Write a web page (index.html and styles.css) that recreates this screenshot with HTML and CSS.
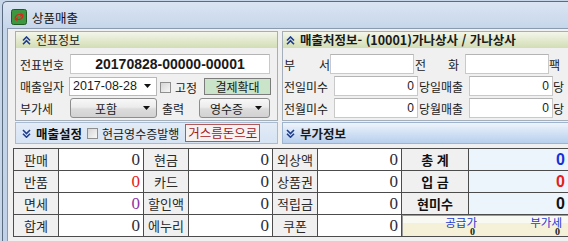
FILE: index.html
```html
<!doctype html>
<html lang="ko">
<head>
  <meta charset="UTF-8">
  <meta name="viewport" content="width=device-width, initial-scale=1.0">
  <title>상품매출</title>
  <link rel="stylesheet" href="styles.css">
</head>
<body>
<div class="window">
  <div class="titlebar">
    <svg class="titlebar__icon" width="16" height="16" viewBox="0 0 16 16">
      <rect x="0.5" y="0.5" width="15" height="15" rx="2" fill="#3d9640" stroke="#1f5a22"/>
      <path d="M3.5 9.5c0-3.5 3.5-5.5 6.5-4.2L9.2 3.5l3.6 2.6-3.9 1.7.6-1.5C7.4 5.5 5 6.8 4.8 9.6z" fill="#d8281a"/>
      <path d="M12.5 6.5c0 3.5-3.5 5.5-6.5 4.2l.8 1.8-3.6-2.6 3.9-1.7-.6 1.5c2.1.8 4.5-.5 4.7-3.3z" fill="#d8281a"/>
    </svg>
    <span class="titlebar__text">상품매출</span>
  </div>

  <div class="client">
    <div class="top">
      <!-- 전표정보 / 매출설정 -->
      <div class="side side--left">
        <section class="panel">
          <h2 class="panel__head">
            <svg class="chev" width="9" height="9" viewBox="0 0 9 9"><path d="M1 4.5L4.5 1 8 4.5M1 8.2L4.5 4.7 8 8.2"/></svg>
            전표정보
          </h2>
          <div class="panel__body">
            <div class="row">
              <span class="label">전표번호</span>
              <span class="field field--slip">20170828-00000-00001</span>
            </div>
            <div class="row">
              <span class="label">매출일자</span>
              <span class="field field--date">
                2017-08-28
                <svg class="arrow" width="7" height="4" viewBox="0 0 7 4"><path d="M0 0h7L3.5 4z"/></svg>
              </span>
              <label class="check check--fixed"><span class="check__box"></span>고정</label>
              <button class="btn btn--green">결제확대</button>
            </div>
            <div class="row">
              <span class="label">부가세</span>
              <button class="combo combo--tax">포함<svg class="arrow" width="7" height="4" viewBox="0 0 7 4"><path d="M0 0h7L3.5 4z"/></svg></button>
              <span class="label label--print">출력</span>
              <button class="combo combo--print">영수증<svg class="arrow" width="7" height="4" viewBox="0 0 7 4"><path d="M0 0h7L3.5 4z"/></svg></button>
            </div>
          </div>
        </section>

        <div class="bar bar--settings">
          <svg class="chev" width="9" height="9" viewBox="0 0 9 9"><path d="M1 1L4.5 4.5 8 1M1 4.7L4.5 8.2 8 4.7"/></svg>
          <span class="bar__title">매출설정</span>
          <label class="check"><span class="check__box"></span>현금영수증발행</label>
          <button class="btn btn--change">거스름돈으로</button>
        </div>
      </div>

      <!-- 매출처정보 / 부가정보 -->
      <div class="side side--right">
        <section class="panel">
          <h2 class="panel__head panel__head--bold">
            <svg class="chev" width="9" height="9" viewBox="0 0 9 9"><path d="M1 4.5L4.5 1 8 4.5M1 8.2L4.5 4.7 8 8.2"/></svg>
            매출처정보- (10001)가나상사 / 가나상사
          </h2>
          <div class="panel__body panel__body--client">
            <div class="row">
              <span class="label label--spread">부 서</span>
              <span class="field field--info"></span>
              <span class="label label--mid"><span class="label--spread label--phone">전 화</span></span>
              <span class="field field--info"></span>
              <span class="label">팩</span>
            </div>
            <div class="row">
              <span class="label">전일미수</span>
              <span class="field field--info field--num">0</span>
              <span class="label label--mid">당일매출</span>
              <span class="field field--info field--num">0</span>
              <span class="label">당</span>
            </div>
            <div class="row">
              <span class="label">전월미수</span>
              <span class="field field--info field--num">0</span>
              <span class="label label--mid">당월매출</span>
              <span class="field field--info field--num">0</span>
              <span class="label">당</span>
            </div>
          </div>
        </section>

        <div class="bar bar--extra">
          <svg class="chev" width="9" height="9" viewBox="0 0 9 9"><path d="M1 1L4.5 4.5 8 1M1 4.7L4.5 8.2 8 4.7"/></svg>
          <span class="bar__title">부가정보</span>
        </div>
      </div>
    </div>

    <!-- 합계 표 -->
    <div class="summary">
      <div class="cell cell--label">판매</div>
      <div class="cell cell--value">0</div>
      <div class="cell cell--label">현금</div>
      <div class="cell cell--value">0</div>
      <div class="cell cell--label">외상액</div>
      <div class="cell cell--value">0</div>
      <div class="cell cell--label cell--strong">총 계</div>
      <div class="cell cell--total cell--blue">0</div>

      <div class="cell cell--label">반품</div>
      <div class="cell cell--value cell--red">0</div>
      <div class="cell cell--label">카드</div>
      <div class="cell cell--value">0</div>
      <div class="cell cell--label">상품권</div>
      <div class="cell cell--value">0</div>
      <div class="cell cell--label cell--strong">입 금</div>
      <div class="cell cell--total cell--red">0</div>

      <div class="cell cell--label">면세</div>
      <div class="cell cell--value cell--purple">0</div>
      <div class="cell cell--label">할인액</div>
      <div class="cell cell--value">0</div>
      <div class="cell cell--label">적립금</div>
      <div class="cell cell--value">0</div>
      <div class="cell cell--label cell--strong">현미수</div>
      <div class="cell cell--total">0</div>

      <div class="cell cell--label">합계</div>
      <div class="cell cell--value">0</div>
      <div class="cell cell--label">에누리</div>
      <div class="cell cell--value">0</div>
      <div class="cell cell--label">쿠폰</div>
      <div class="cell cell--value">0</div>
      <div class="cell supply">
        <div class="supply__item supply__item--price">
          <span class="supply__name">공급가</span>
          <span class="supply__num">0</span>
        </div>
        <div class="supply__item supply__item--vat">
          <span class="supply__name">부가세</span>
          <span class="supply__num">0</span>
        </div>
      </div>
    </div>
  </div>
</div>
</body>
</html>
```

FILE: styles.css
```css
body {
  margin: 0;
  width: 568px;
  height: 241px;
  overflow: hidden;
  background: #c7d6e9;
  font-family: "Noto Sans CJK KR", "Noto Sans", sans-serif;
  font-size: 12px;
  color: #1a1a1a;
}

button {
  font: inherit;
  color: inherit;
  padding: 0;
  margin: 0;
}

/* Window */

.window {
  height: 240px;
  margin: 1px 0 0 2px;
  border: 1px solid #5b6c80;
  border-right: 0;
  border-bottom: 0;
  border-radius: 5px 0 0 0;
  background: linear-gradient(#dbe5f2, #c6d6ea 26px, #c1d2e8);
}

.titlebar {
  display: flex;
  align-items: center;
  height: 26px;
  padding: 4px 0 0 8px;
  box-sizing: border-box;
}

.titlebar__text {
  margin-left: 5px;
  font-size: 12.5px;
  color: #111;
}

.client {
  height: 213px;
  margin-left: 4px;
  border-left: 1px solid #8a9bb0;
  border-top: 1px solid #8a9bb0;
  background: #f0f0f0;
}

.top {
  display: flex;
  align-items: flex-start;
  padding: 2px 0 0 7px;
}

.side--left {
  flex: none;
  width: 263px;
}

.side--right {
  flex: none;
  width: 300px;
  margin-left: 4px;
}

/* Panels */

.panel {
  height: 90px;
  box-sizing: border-box;
  border: 1px solid #a5afba;
}

.panel__head {
  display: flex;
  align-items: center;
  height: 16px;
  margin: 0;
  padding-left: 6px;
  font-size: 12px;
  font-weight: normal;
  line-height: 16px;
  background: linear-gradient(#f3f6ea, #dfe7c9 60%, #d2ddb5);
}

.panel__head--bold {
  font-weight: bold;
  font-size: 12.5px;
  padding-left: 3px;
}

.chev {
  flex: none;
  margin-right: 5px;
}

.chev path {
  fill: none;
  stroke: #1d3c8e;
  stroke-width: 1.6;
}

.panel__body {
  padding: 6px 0 0 4px;
}

.panel__body--client {
  padding-left: 1px;
}

.row {
  display: flex;
  align-items: center;
  height: 20px;
  margin-bottom: 2px;
}

.label {
  flex: none;
  width: 50px;
  white-space: nowrap;
}

.label--spread {
  display: inline-block;
  width: 46px;
  text-align: justify;
  text-align-last: justify;
}

.label--mid {
  width: 50px;
  margin-left: 1px;
}

.label--phone {
  width: 44px;
}

.label--print {
  width: 37px;
  margin-left: 5px;
}

.field {
  flex: none;
  box-sizing: border-box;
  height: 20px;
  background: #fff;
  border: 1px solid #c9c9c9;
  border-top-color: #b4b4b4;
}

.field--slip {
  width: 200px;
  font-family: "Liberation Sans", Arial, sans-serif;
  font-weight: bold;
  font-size: 14px;
  line-height: 18px;
  text-align: center;
}

.field--date {
  display: flex;
  align-items: center;
  justify-content: space-between;
  width: 88px;
  height: 19px;
  margin-left: -1px;
  padding: 0 5px 0 3px;
  font-family: "Liberation Sans", Arial, sans-serif;
  font-size: 12.5px;
  border-color: #b8b8b8;
}

.field--info {
  width: 84px;
}

.field--num {
  padding-right: 3px;
  font-family: "Liberation Sans", Arial, sans-serif;
  font-size: 12px;
  line-height: 18px;
  text-align: right;
}

.arrow path {
  fill: #111;
}

/* Controls */

.check {
  display: flex;
  align-items: center;
  white-space: nowrap;
}

.check__box {
  width: 9px;
  height: 9px;
  margin-right: 4px;
  border: 1px solid #8f8f8f;
  background: linear-gradient(135deg, #d6d6d6, #f7f7f7);
}

.check--fixed {
  margin-left: 3px;
  width: 44px;
  padding-top: 3px;
}

.btn {
  box-sizing: border-box;
  height: 17px;
  line-height: 15px;
  cursor: pointer;
}

.btn--green {
  width: 67px;
  border: 1px solid #7c7c7c;
  background: #c9e4c9;
  font-size: 12px;
}

.combo {
  display: flex;
  align-items: center;
  justify-content: space-between;
  box-sizing: border-box;
  height: 20px;
  border: 1px solid #8d8d8d;
  border-radius: 3px;
  background: linear-gradient(#f8f8f8, #ececec 45%, #dcdcdc 55%, #d2d2d2);
}

.combo--tax {
  width: 87px;
  padding: 0 6px 0 24px;
}

.combo--print {
  width: 71px;
  padding: 0 7px 0 10px;
}

/* Collapsed bars */

.bar {
  display: flex;
  align-items: center;
  box-sizing: border-box;
  height: 22px;
  margin-top: 1px;
  padding-left: 6px;
  white-space: nowrap;
}

.bar__title {
  font-weight: bold;
  font-size: 12.5px;
}

.bar--settings {
  border: 1px solid #a9bbd1;
  background: linear-gradient(#e3ecf7, #d6e3f3);
}

.bar--settings .bar__title {
  margin-right: 5px;
  color: #111;
}

.bar--extra {
  padding-left: 3px;
  border: 1px solid #9fb4cf;
  background: linear-gradient(#eef4fb, #d2e1f4 50%, #b8cfed);
}

.btn--change {
  height: 18px;
  margin-left: 6px;
  padding: 0 2px;
  border: 1px solid #b25858;
  background: #f7f2f2;
  color: #a3161b;
  font-size: 12.5px;
  line-height: 16px;
}

/* Summary table */

.summary {
  display: grid;
  grid-template-columns: 44px 84px 44px 83px 44px 83px 66px 110px;
  grid-auto-rows: 21px;
  gap: 1px;
  width: max-content;
  margin: 4px 0 0 5px;
  padding: 1px;
  background: #4c4c4c;
}

.cell {
  line-height: 21px;
}

.cell--label {
  background: #f0f0f0;
  text-align: center;
  font-size: 13px;
  color: #2a2a2a;
}

.cell--strong {
  font-weight: bold;
  color: #111;
}

.cell--value {
  padding-right: 3px;
  background: #fff;
  text-align: right;
  font-family: "Liberation Serif", "Times New Roman", serif;
  font-size: 17px;
  color: #2b2d3c;
}

.cell--total {
  padding-right: 14px;
  background: #edf5fc;
  text-align: right;
  font-family: "Liberation Sans", Arial, sans-serif;
  font-weight: bold;
  font-size: 16px;
  color: #111;
}

.cell--red {
  color: #e3201c;
}

.cell--blue {
  color: #1530d8;
}

.cell--purple {
  color: #8b34a8;
}

.supply {
  grid-column: span 2;
  display: flex;
  box-sizing: border-box;
  overflow: hidden;
  border-top: 1px solid #9c9c9c;
  border-left: 1px solid #9c9c9c;
  background: linear-gradient(#f9f9f3 0, #f9f9f3 7px, #f4f1d8 7px);
}

.supply__item {
  display: flex;
  flex-direction: column;
  align-items: flex-end;
  flex: none;
}

.supply__item--price {
  width: 74px;
}

.supply__item--vat {
  width: 85px;
}

.supply__name {
  font-size: 11.5px;
  line-height: 12px;
  color: #1f3bd0;
}

.supply__num {
  margin-right: 2px;
  font-family: "Liberation Serif", serif;
  font-weight: bold;
  font-size: 10px;
  line-height: 8px;
}
```
